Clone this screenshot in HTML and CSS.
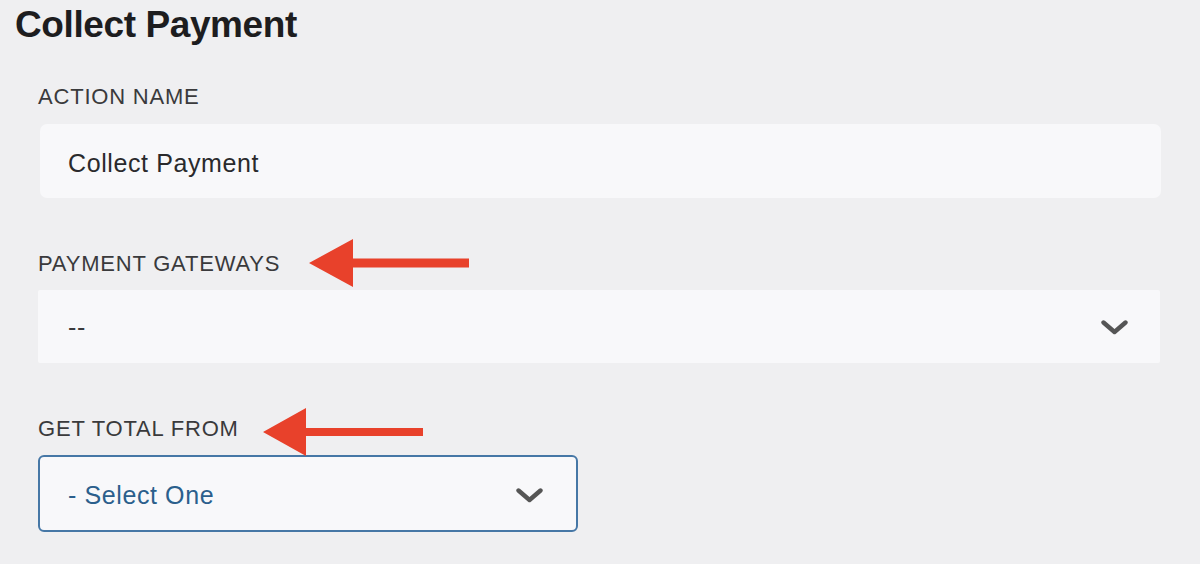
FILE: index.html
```html
<!DOCTYPE html>
<html>
<head>
<meta charset="utf-8">
<link rel="stylesheet" href="styles.css">
</head>
<body>
<div class="page">
  <h1 class="title">Collect Payment</h1>
  <div class="form">
    <div class="field">
      <div class="label">ACTION NAME</div>
      <div class="input">Collect Payment</div>
    </div>
    <div class="field">
      <div class="label">PAYMENT GATEWAYS
        <svg class="arrow arrow-1" width="160" height="48" viewBox="0 0 160 48"><polygon points="0,24 44,0 44,19.5 160,19.5 160,28.5 44,28.5 44,48" fill="#e8412b"/></svg>
      </div>
      <div class="select select-plain">
        <span class="value">--</span>
        <svg class="chev" width="27" height="15" viewBox="0 0 27 15"><polyline points="2.5,2.5 13.5,12 24.5,2.5" fill="none" stroke="#555" stroke-width="4.4" stroke-linecap="round" stroke-linejoin="round"/></svg>
      </div>
    </div>
    <div class="field">
      <div class="label">GET TOTAL FROM
        <svg class="arrow arrow-2" width="160" height="48" viewBox="0 0 160 48"><polygon points="0,24 43,0 43,20 160,20 160,28 43,28 43,48" fill="#e8412b"/></svg>
      </div>
      <div class="select select-focus">
        <span class="value value-blue">- Select One</span>
        <svg class="chev" width="27" height="15" viewBox="0 0 27 15"><polyline points="2.5,2.5 13.5,12 24.5,2.5" fill="none" stroke="#555" stroke-width="4.4" stroke-linecap="round" stroke-linejoin="round"/></svg>
      </div>
    </div>
  </div>
</div>
</body>
</html>
```

FILE: styles.css
```css
html, body {
  margin: 0;
  padding: 0;
}
body {
  background: #efeff1;
  font-family: "Liberation Sans", Arial, sans-serif;
  width: 1200px;
  height: 564px;
  overflow: hidden;
}
.page {
  padding: 3px 0 0 15px;
}
.title {
  margin: 0;
  font-size: 37px;
  line-height: 44px;
  font-weight: 700;
  color: #1d1d1f;
  letter-spacing: -0.4px;
}
.form {
  padding-left: 23px;
  width: 1122px;
}
.field {
  margin-top: 53px;
}
.field:first-child {
  margin-top: 37px;
}
.label {
  position: relative;
  font-size: 22px;
  line-height: 26px;
  color: #3a3a3c;
  letter-spacing: 0.8px;
  margin-bottom: 13px;
}
.field:first-child .label {
  margin-bottom: 14px;
}
.arrow {
  position: absolute;
  display: block;
}
.arrow-1 {
  left: 271px;
  top: -12px;
}
.arrow-2 {
  left: 225px;
  top: -8px;
}
.input {
  margin-left: 2px;
  width: 1121px;
  height: 74px;
  box-sizing: border-box;
  background: #f8f8fa;
  border-radius: 7px;
  display: flex;
  align-items: center;
  padding: 4px 0 0 28px;
  font-size: 25px;
  color: #2a2a2c;
  letter-spacing: 0.6px;
}
.select {
  display: flex;
  align-items: center;
  justify-content: space-between;
  box-sizing: border-box;
  background: #f8f8fa;
}
.select-plain {
  width: 1122px;
  height: 73px;
  padding: 2px 32px 0 30px;
  border-radius: 2px;
}
.select-focus {
  width: 540px;
  height: 77px;
  border: 2px solid #4677a6;
  border-radius: 6px;
  padding: 4px 33px 0 28px;
}
.value {
  font-size: 25px;
  color: #3a3a3c;
  letter-spacing: 0.6px;
}
.value-blue {
  color: #2b5f8c;
}
.chev {
  display: block;
}
```
